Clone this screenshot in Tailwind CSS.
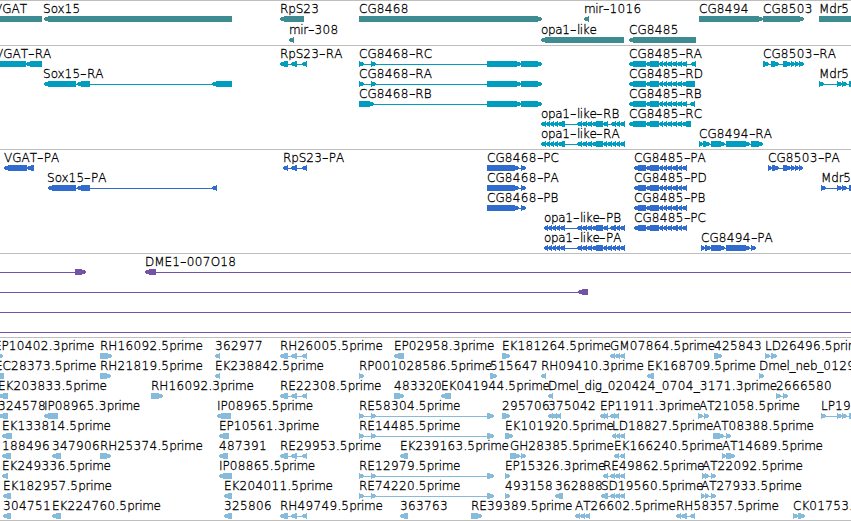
<!DOCTYPE html>
<html lang="en">
<head>
    <meta charset="UTF-8">
    <meta name="viewport" content="width=device-width, initial-scale=1.0">
    <title>Genome Browser</title>
    <script src="https://cdn.jsdelivr.net/npm/@tailwindcss/browser@4"></script>
</head>
<body class="bg-white w-[851px] h-[521px] overflow-hidden font-['DejaVu_Sans_Light','DejaVu_Sans',sans-serif] font-extralight text-[12px] text-black [font-kerning:none] [-webkit-text-stroke:0.3px_#000]">
    <main class="flex flex-col w-[851px] h-[521px] overflow-hidden border-b border-[#bebebe]">
        <section id="genes" class="flex flex-col shrink-0 gap-px h-[45px] pt-px border-t border-[#bebebe] text-[#3e8c91]"></section>
        <section id="transcripts" class="flex flex-col shrink-0 h-[104px] pt-px border-t border-[#bebebe] text-[#009dbf]"></section>
        <section id="proteins" class="flex flex-col shrink-0 h-[104px] pt-px border-t border-[#bebebe] text-[#2f6ccd]"></section>
        <section id="insertions" class="flex flex-col shrink-0 h-[84px] pt-px border-t border-[#bebebe] text-[#7353a5]"></section>
        <section id="ests" class="flex flex-col shrink-0 h-[183px] pt-px border-t border-[#bebebe] text-[#86bbdc]"></section>
    </main>
    <script>
        // One string per row; features are "label @labelX strand start-end,start-end", split by ";"
        const RPS = '280-288,291-297,302-307';
        const CG68 = '359-364,371-376,487-521,521-542';
        const CG85 = '629-646,646-659,659-663,663-667,667-672,672-677,677-682';
        const CG85P = '634-646,646-659,659-663,663-667,667-672,672-678,678-682,682-687';
        const RE = '359-364,371-376,487-494';
        const tracks = {
            genes: [
                'VGAT @-6 < -8-42; Sox15 @43 < 44-232; RpS23 @280 < 280-304; CG8468 @359 > 359-542; mir-1016 @584 < 584-589; CG8494 @699 > 699-763; CG8503 @763 > 763-804; Mdr5 @819 > 819-870',
                'mir-308 @289 < 289-294; opa1-like @541 < 541-624; CG8485 @629 < 629-696'
            ],
            transcripts: [
                `VGAT-RA @-5 < -8-26,26-42; RpS23-RA @280 < ${RPS}; CG8468-RC @359 > ${CG68}; CG8485-RA @629 < ${CG85},682-687,691-696; CG8503-RA @763 > 763-769,771-779,783-791,791-795,795-799,799-804`,
                `Sox15-RA @43 < 44-76,77-90,212-232; CG8468-RA @359 > ${CG68}; CG8485-RD @629 < ${CG85},682-695; Mdr5 @819 > 819-824,837-842,842-847,849-860`,
                `CG8468-RB @359 > 359-374,487-521,521-542; CG8485-RB @629 < ${CG85},682-687,690-695`,
                `opa1-like-RB @541 < 541-546,546-550,550-554,554-558,558-565,577-582,582-587,587-592,592-603,603-608,611-616,616-620,620-625; CG8485-RC @629 < ${CG85},682-691`,
                'opa1-like-RA @541 < 541-546,546-550,550-554,554-558,558-565,577-582,582-587,587-592,592-603,603-607,607-612,612-616,616-620,620-625; CG8494-RA @699 > 699-703,703-710,711-725,726-750,751-763'
            ],
            proteins: [
                `VGAT-PA @4 < 4-27,27-34; RpS23-PA @283 < 283-288,291-297,302-307; CG8468-PC @487 > 487-519,521-526; CG8485-PA @634 < ${CG85P}; CG8503-PA @768 > 768-772,772-779,783-791,791-795,795-799,799-803`,
                `Sox15-PA @47 < 48-76,77-90,212-217; CG8468-PA @487 > 487-519,521-526; CG8485-PD @634 < ${CG85P}; Mdr5 @821 > 821-826,837-842,842-847,849-860`,
                `CG8468-PB @487 > 487-519,521-526; CG8485-PB @634 < ${CG85P}`,
                `opa1-like-PB @544 < 544-548,548-552,552-556,556-560,560-565,577-582,582-587,587-592,592-603,603-608,610-616,616-620,620-625; CG8485-PC @634 < ${CG85P}`,
                'opa1-like-PA @544 < 544-548,548-552,552-556,556-560,560-565,577-582,582-587,587-592,592-603,603-607,607-612,612-616,616-620,620-625; CG8494-PA @701 > 701-705,705-711,711-725,726-750,751-756'
            ],
            insertions: [
                ' @0 > -9--6,75-86; DME1-007O18 @145 < 145-156,870-880',
                ' @0 < -9--6,578-588',
                ' @0 > -9--6,870-880',
                ' @0 > -9--6,870-880'
            ],
            ests: [
                `EP10402.3prime @-6 > -8-3; RH16092.5prime @100 > 100-112; 362977 @215 < 215-220; RH26005.5prime @280 < ${RPS}; EP02958.3prime @394 < 394-404; EK181264.5prime @502 > 502-510; GM07864.5prime @610 < 610-615,615-620,620-625; 425843 @714 > 714-722; LD26496.5prime @765 > 765-770,771-777`,
                'EC28373.5prime @-5 < -8-4; RH21819.5prime @100 > 100-111; EK238842.5prime @215 < 215-220; RP001028586.5prime @359 > 359-364; 515647 @490 > 490-497; RH09410.3prime @541 < 541-546; EK168709.5prime @647 < 647-654; Dmel_neb_0129 @759 > 759-764',
                `EK203833.5prime @-2 < -1-8; RH16092.3prime @151 > 151-163; RE22308.5prime @280 < ${RPS}; 483320 @394 > 394-404; EK041944.5prime @441 < 441-451; Dmel_dig_020424_0704_3171.3prime @548 < 548-553; 2666580 @776 > 776-781,783-788`,
                `324578 @-2 < -1-8; IP08965.3prime @44 < 44-58; IP08965.5prime @217 < 217-231; RE58304.5prime @359 > ${RE}; 295706 @502 > 502-510; 375042 @548 < 548-553,552-557,556-561; EP11911.3prime @600 < 600-605,604-608,610-615,614-619; AT21058.5prime @699 > 698-703,704-709; LP19 @821 > 821-826,837-842,842-847,849-860`,
                `EK133814.5prime @2 < 2-12; EP10561.3prime @219 < 219-229; RE14485.5prime @359 > ${RE}; EK101920.5prime @505 > 505-513; LD18827.5prime @612 < 612-616,616-620,620-625; AT08388.5prime @713 > 713-724,726-731`,
                `188496 @2 < 2-11; 347906 @52 < 52-61; RH25374.5prime @100 > 100-111; 487391 @219 < 219-228; RE29953.5prime @280 < ${RPS}; EK239163.5prime @400 < 400-408; GH28385.5prime @510 > 510-520,521-526; EK166240.5prime @614 < 614-619,620-625; AT14689.5prime @722 > 722-726,726-735`,
                `EK249336.5prime @2 < 2-8; IP08865.5prime @219 < 219-232; RE12979.5prime @359 > ${RE}; EP15326.3prime @505 > 505-510; RE49862.5prime @603 < 603-608,610-615,615-620,620-625; AT22092.5prime @702 > 702-706,705-709,711-716`,
                `EK182957.5prime @3 < 3-11; EK204011.5prime @224 < 224-232; RE74220.5prime @359 > ${RE}; 493158 @505 > 505-510; 362888 @555 < 555-563; SD19560.5prime @601 < 601-608,610-615,615-620,620-625; AT27933.5prime @701 > 701-705,705-709,711-716`,
                `304751 @3 < 3-11; EK224760.5prime @52 < 52-61; 325806 @224 < 224-232; RH49749.5prime @280 < ${RPS}; 363763 @400 < 400-408; RE39389.5prime @471 > 471-482; AT26602.5prime @575 < 575-580,580-585,585-590; RH58357.5prime @676 < 676-681,681-687,690-695; CK01753.5 @793 > 793-798,798-805`
            ]
        };

        // Digits sit on an 8px pitch, hyphens are wide, lowercase is slightly tight
        function spaced(label) {
            return label
                .replace(/\d+|[a-z]+|-/g, s => {
                    if (s === '-') return '<span class="inline-block w-[6.6px] origin-left scale-x-150">-</span>';
                    return /\d/.test(s)
                        ? `<span class="tracking-[0.37px]">${s}</span>`
                        : `<span class="tracking-[-0.35px]">${s}</span>`;
                });
        }

        // Exon box with its arrow head pointing along the strand
        function exon(a, b, strand) {
            const h = Math.min(5, b - a);
            return strand === '<'
                ? `M${b} 0H${a + h}L${a} 2V4L${a + h} 6H${b}Z`
                : `M${a} 0H${b - h}L${b} 2V4L${b - h} 6H${a}Z`;
        }

        for (const [id, rows] of Object.entries(tracks)) {
            document.getElementById(id).innerHTML = rows.map(row => {
                let labels = '', shapes = '';
                for (const f of row.split(';')) {
                    const [, label, x, strand, list] = f.match(/^\s*(\S*) ?@(-?\d+) ([<>]) (.+)$/);
                    const ex = list.split(',').map(e => e.match(/^(-?\d+)-(-?\d+)$/).slice(1).map(Number));
                    labels += `<span class="absolute top-0 whitespace-nowrap" style="left:${x}px">${spaced(label)}</span>`;
                    if (ex.length > 1) {
                        const start = ex[0][0], end = ex[ex.length - 1][1];
                        shapes += `<rect x="${start + 1}" y="3" width="${end - start - 2}" height="1"/>`;
                    }
                    // separate paths so that neighbouring exons may overlap
                    shapes += ex.map(([a, b]) => `<path d="${exon(a, b, strand)}"/>`).join('');
                }
                return `<div class="h-5 shrink-0">
                    <div class="relative h-3.5 leading-[14px] text-black">${labels}</div>
                    <svg class="block w-[851px] h-1.5" width="851" height="6" viewBox="0 0 851 6" fill="currentColor" shape-rendering="crispEdges">${shapes}</svg>
                </div>`;
            }).join('');
        }
    </script>
</body>
</html>
